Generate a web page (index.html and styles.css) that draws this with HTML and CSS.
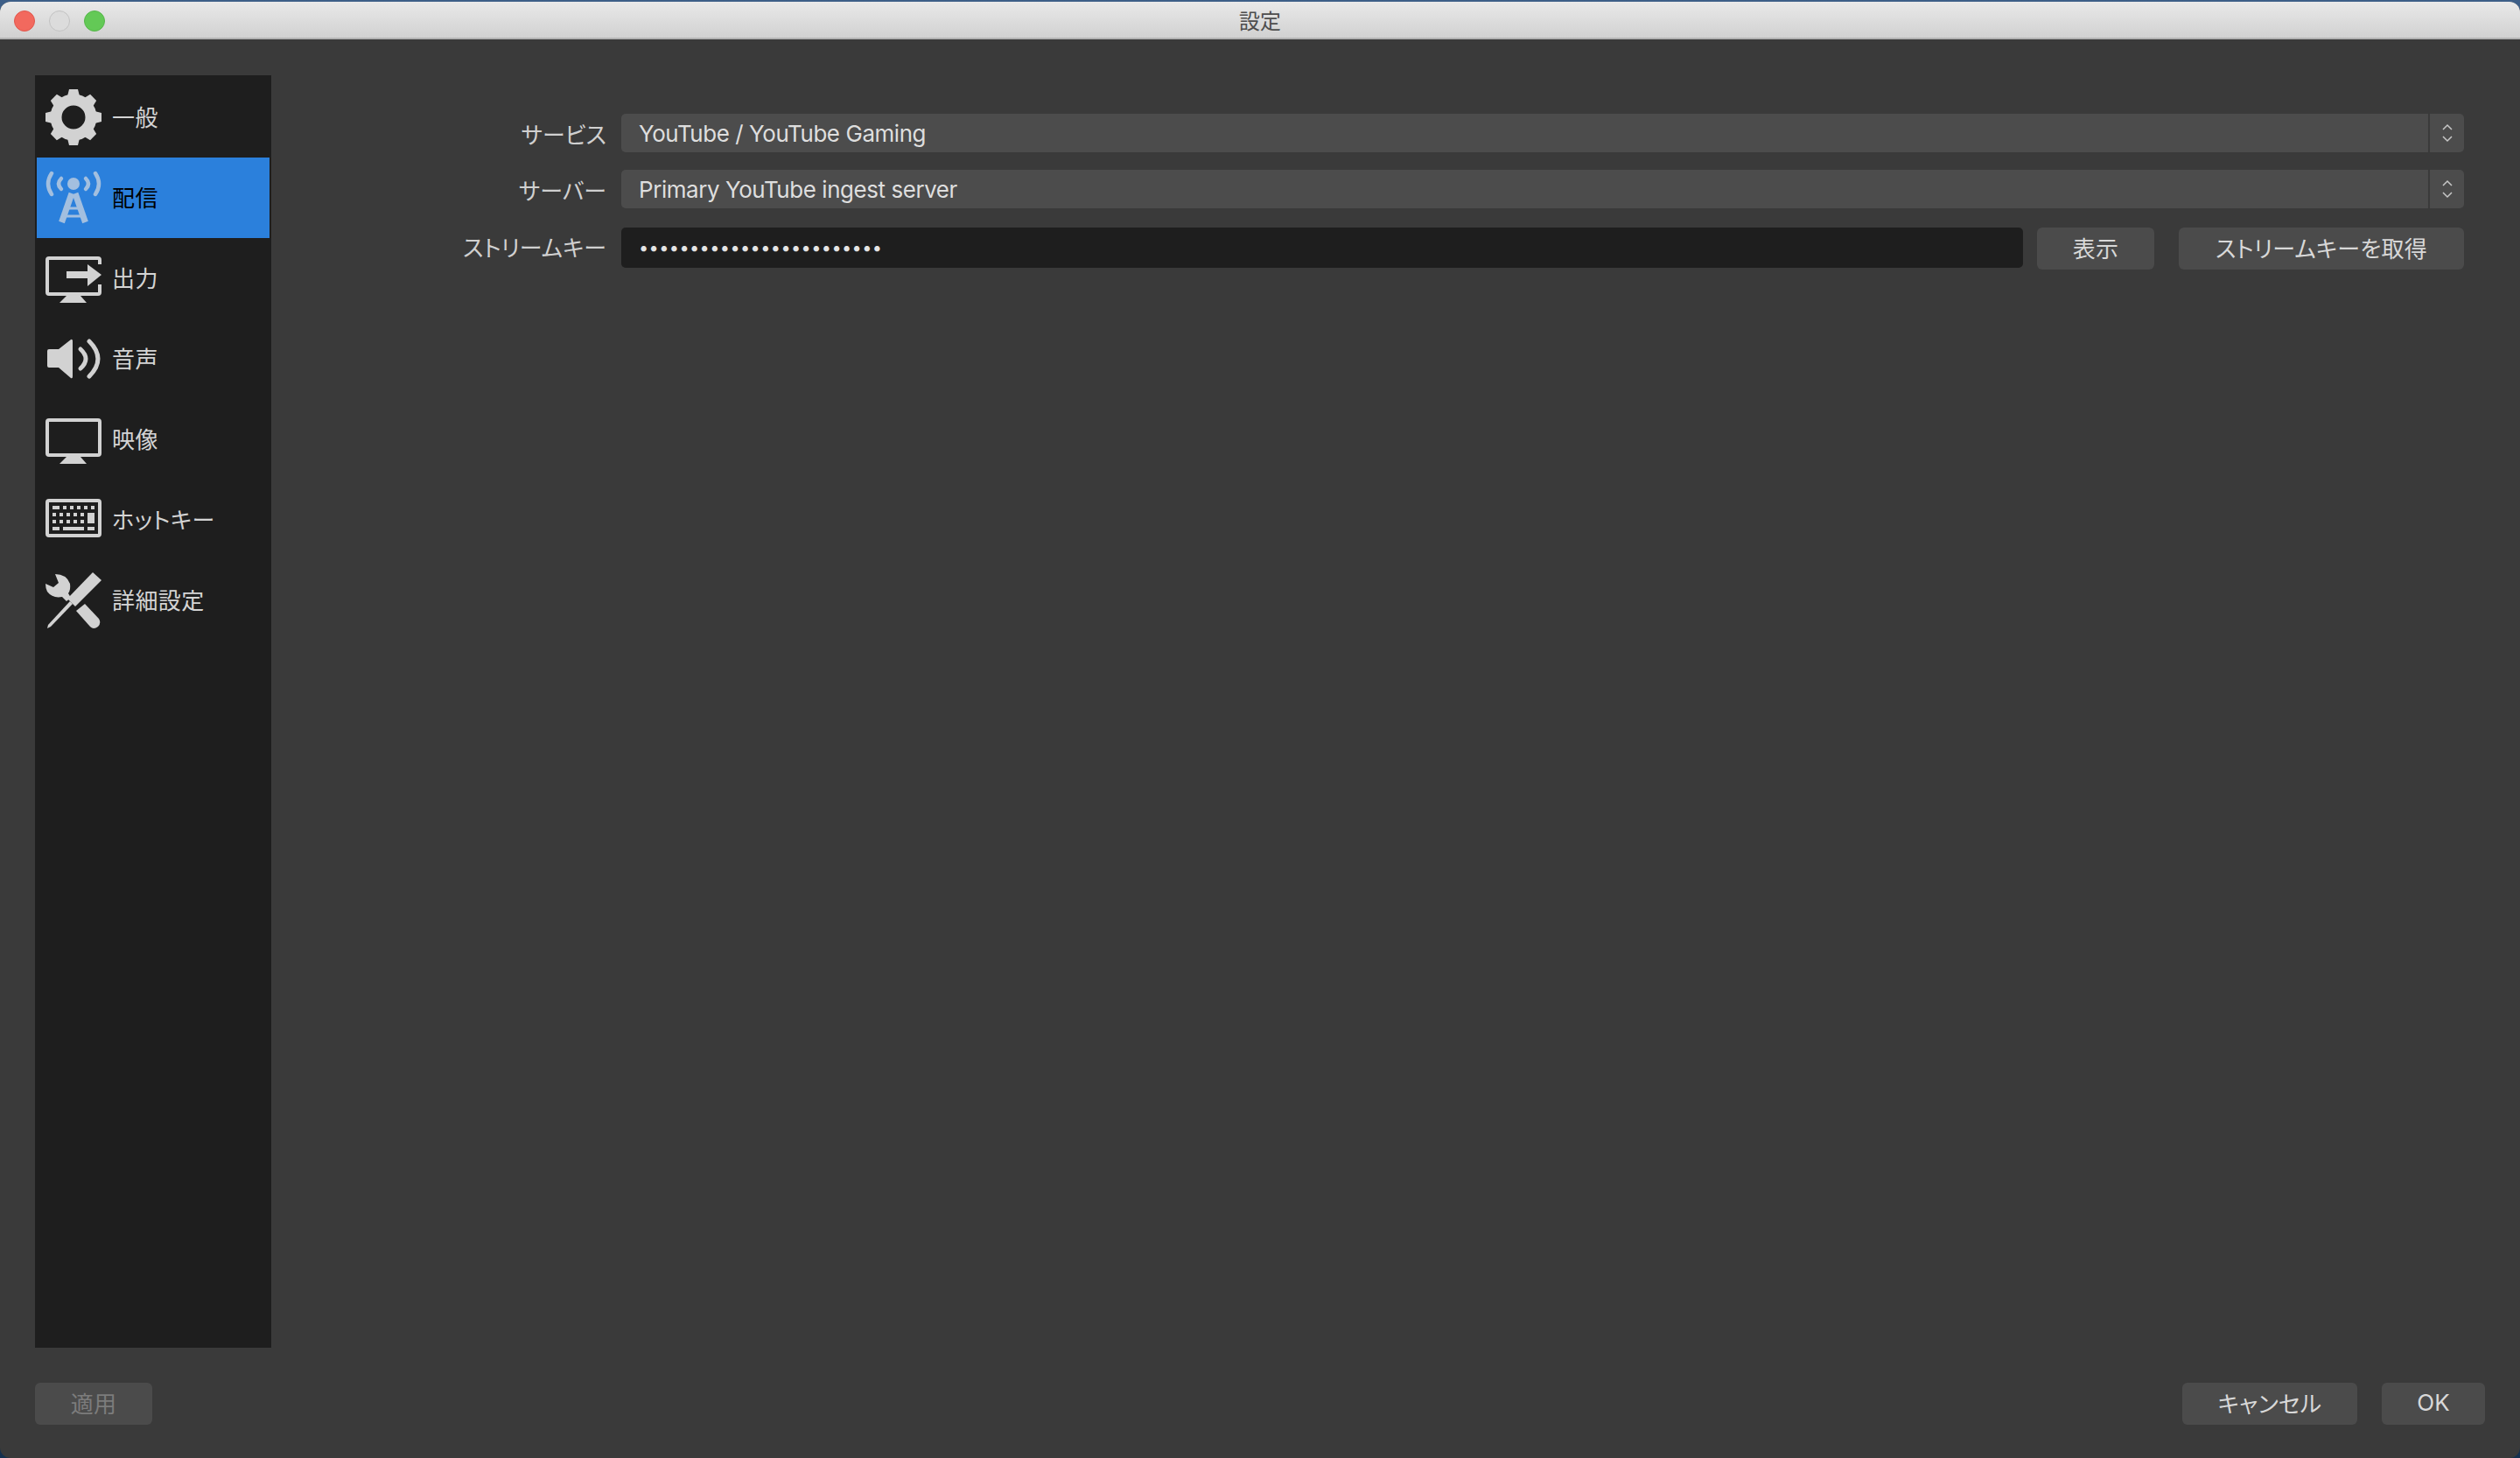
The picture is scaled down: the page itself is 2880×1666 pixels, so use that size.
FILE: index.html
```html
<!DOCTYPE html>
<html>
<head>
    <title>設定</title>
    <link rel="stylesheet" href="styles.css">
</head>
<body>
    <div class="window">
        <div class="titlebar">
            <div class="lights">
                <span class="light red"></span>
                <span class="light grey"></span>
                <span class="light green"></span>
            </div>
            <div class="title">設定</div>
        </div>

        <div class="main">
            <div class="content">
                <div class="sidebar">
                    <div class="item">
                        <svg class="icon" viewBox="0 0 64 64">
                            <circle cx="32" cy="32" r="20" fill="none" stroke="currentColor" stroke-width="13"/>
                            <g fill="currentColor">
                                <polygon id="tooth" points="24,12 27,0 37,0 40,12"/>
                                <use href="#tooth" transform="rotate(45 32 32)"/>
                                <use href="#tooth" transform="rotate(90 32 32)"/>
                                <use href="#tooth" transform="rotate(135 32 32)"/>
                                <use href="#tooth" transform="rotate(180 32 32)"/>
                                <use href="#tooth" transform="rotate(225 32 32)"/>
                                <use href="#tooth" transform="rotate(270 32 32)"/>
                                <use href="#tooth" transform="rotate(315 32 32)"/>
                            </g>
                        </svg>
                        <span>一般</span>
                    </div>
                    <div class="item selected">
                        <svg class="icon" viewBox="0 0 64 64">
                            <circle cx="32" cy="16" r="7" fill="currentColor"/>
                            <g fill="none" stroke="currentColor" stroke-linecap="round">
                                <path d="M7 4Q-1 16 7 28" stroke-width="4.5"/>
                                <path d="M57 4Q65 16 57 28" stroke-width="4.5"/>
                                <path d="M18 10Q12 16 18 22" stroke-width="4.5"/>
                                <path d="M46 10Q52 16 46 22" stroke-width="4.5"/>
                            </g>
                            <g fill="none" stroke="currentColor">
                                <path d="M30 27L18.5 60" stroke-width="7"/>
                                <path d="M34 27L45.5 60" stroke-width="7"/>
                                <path d="M25 44H39" stroke-width="3"/>
                                <path d="M22 53H42" stroke-width="3"/>
                            </g>
                        </svg>
                        <span>配信</span>
                    </div>
                    <div class="item">
                        <svg class="icon" viewBox="0 0 64 64">
                            <path d="M62 16V11a2 2 0 0 0-2-2H4a2 2 0 0 0-2 2V48a2 2 0 0 0 2 2H60a2 2 0 0 0 2-2V39" fill="none" stroke="currentColor" stroke-width="4"/>
                            <polygon points="24,24 48,24 48,16 64,28 48,41 48,32 24,32" fill="currentColor"/>
                            <polygon points="24,52 40,52 47,60 16,60" fill="currentColor"/>
                        </svg>
                        <span>出力</span>
                    </div>
                    <div class="item">
                        <svg class="icon" viewBox="0 0 64 64">
                            <path d="M4 21H15L29 10Q31 9 31 12V52Q31 55 29 54L15 42H4Q2 42 2 40V23Q2 21 4 21Z" fill="currentColor"/>
                            <g fill="none" stroke="currentColor" stroke-width="5" stroke-linecap="round">
                                <path d="M40 21Q52 32 40 43"/>
                                <path d="M50 12Q70 32 50 52"/>
                            </g>
                        </svg>
                        <span>音声</span>
                    </div>
                    <div class="item">
                        <svg class="icon" viewBox="0 0 64 64">
                            <rect x="2" y="10" width="60" height="40" rx="2" fill="none" stroke="currentColor" stroke-width="4"/>
                            <polygon points="24,52 40,52 47,60 16,60" fill="currentColor"/>
                        </svg>
                        <span>映像</span>
                    </div>
                    <div class="item">
                        <svg class="icon" viewBox="0 0 64 64">
                            <rect x="2" y="10" width="60" height="40" rx="2" fill="none" stroke="currentColor" stroke-width="4"/>
                            <g fill="currentColor">
                                <rect x="8" y="16" width="8" height="4"/>
                                <rect x="20" y="16" width="4" height="4"/>
                                <rect x="28" y="16" width="4" height="4"/>
                                <rect x="36" y="16" width="4" height="4"/>
                                <rect x="44" y="16" width="4" height="4"/>
                                <rect x="52" y="16" width="4" height="4"/>
                                <rect x="8" y="24" width="4" height="4"/>
                                <rect x="16" y="24" width="4" height="4"/>
                                <rect x="24" y="24" width="4" height="4"/>
                                <rect x="32" y="24" width="4" height="4"/>
                                <rect x="40" y="24" width="4" height="4"/>
                                <rect x="48" y="24" width="8" height="12"/>
                                <rect x="8" y="32" width="4" height="4"/>
                                <rect x="16" y="32" width="4" height="4"/>
                                <rect x="24" y="32" width="4" height="4"/>
                                <rect x="32" y="32" width="4" height="4"/>
                                <rect x="40" y="32" width="4" height="4"/>
                                <rect x="8" y="40" width="8" height="4"/>
                                <rect x="20" y="40" width="24" height="4"/>
                                <rect x="48" y="40" width="8" height="4"/>
                            </g>
                        </svg>
                        <span>ホットキー</span>
                    </div>
                    <div class="item">
                        <svg class="icon" viewBox="0 0 64 64">
                            <g fill="currentColor">
                                <polygon points="54,0 64,9 34,39 25,30"/>
                                <polygon points="28,33 31,36 6,62 2,64 3,60"/>
                                <path d="M35 44L45 36L61 53Q64 58 60 62Q55 66 51 62Z"/>
                                <path d="M11 2Q24 2 28 13Q29 20 26 24L29 29L24 33L19 28Q8 30 2 22Q0 18 0 13L9 17L15 12Z"/>
                            </g>
                        </svg>
                        <span>詳細設定</span>
                    </div>
                </div>

                <div class="form">
                    <div class="row">
                        <label>サービス</label>
                        <div class="combo">
                            <div class="combo-text">YouTube / YouTube Gaming</div>
                            <div class="combo-arrows">
                                <svg class="chevrons" viewBox="0 0 12 24"><path d="M1 8L6 3L11 8M1 16L6 21L11 16"/></svg>
                            </div>
                        </div>
                    </div>
                    <div class="row">
                        <label>サーバー</label>
                        <div class="combo">
                            <div class="combo-text">Primary YouTube ingest server</div>
                            <div class="combo-arrows">
                                <svg class="chevrons" viewBox="0 0 12 24"><path d="M1 8L6 3L11 8M1 16L6 21L11 16"/></svg>
                            </div>
                        </div>
                    </div>
                    <div class="row key-row">
                        <label>ストリームキー</label>
                        <div class="key-input">••••••••••••••••••••••••</div>
                        <button class="btn show-btn">表示</button>
                        <button class="btn get-key-btn">ストリームキーを取得</button>
                    </div>
                </div>
            </div>

            <div class="footer">
                <button class="btn apply-btn" disabled>適用</button>
                <div class="footer-right">
                    <button class="btn cancel-btn">キャンセル</button>
                    <button class="btn ok-btn">OK</button>
                </div>
            </div>
        </div>
    </div>
</body>
</html>
```

FILE: styles.css
```css
html, body {
    margin: 0;
    padding: 0;
    height: 1666px;
    overflow: hidden;
}

body {
    background: linear-gradient(#3d5f88, #14304f);
    font-family: Inter, "Noto Sans CJK JP", sans-serif;
    font-size: 26px;
    font-feature-settings: "palt";
    color: #d8d8d8;
}

.window {
    margin-top: 2px;
    height: 1664px;
    border-radius: 12px;
    overflow: hidden;
    background-color: #3a3a3a;
    display: flex;
    flex-direction: column;
}

.titlebar {
    height: 38px;
    padding-top: 3px;
    flex: none;
    display: grid;
    grid-template-columns: 1fr auto 1fr;
    align-items: center;
    background: linear-gradient(#e9e9e9, #d1d1d1);
    border-bottom: 2px solid #b1b1b1;
}

.lights {
    display: flex;
    gap: 16px;
    padding-left: 16px;
}

.light {
    width: 22px;
    height: 22px;
    border-radius: 50%;
    border: 1px solid transparent;
}

.red {
    background-color: #f2695e;
    border-color: #e0564c;
}

.grey {
    background-color: #dcdcdc;
    border-color: #c2c2c2;
}

.green {
    background-color: #63c956;
    border-color: #55b649;
}

.title {
    font-size: 24px;
    color: #4d4d4d;
    margin-bottom: 3px;
}

.main {
    flex: 1;
    display: flex;
    flex-direction: column;
    padding: 41px 40px 38px;
    min-height: 0;
}

.content {
    flex: 1;
    display: flex;
    min-height: 0;
}

.sidebar {
    width: 266px;
    padding: 2px;
    background-color: #1e1e1e;
    flex: none;
}

.item {
    height: 92px;
    display: flex;
    align-items: center;
    gap: 12px;
    padding-left: 10px;
    color: #d4d4d4;
    letter-spacing: 0.4px;
}

.item span {
    margin-bottom: 3px;
}

.item.selected {
    background-color: #2b80dc;
    color: #000;
}

.icon {
    width: 64px;
    height: 64px;
    flex: none;
    color: #d2d2d2;
}

.selected .icon {
    color: #a3bfdf;
}

.form {
    flex: 1;
    padding: 44px 24px 0 0;
}

.row {
    display: flex;
    align-items: center;
    gap: 17px;
    margin-bottom: 20px;
}

.row label {
    width: 383px;
    flex: none;
    text-align: right;
    color: #d0d0d0;
}

.combo {
    flex: 1;
    height: 44px;
    display: flex;
    border-radius: 5px;
    overflow: hidden;
}

.combo-text {
    flex: 1;
    padding-left: 20px;
    line-height: 46px;
    background-color: #4c4c4c;
    color: #dedede;
    letter-spacing: -0.45px;
}

.combo-arrows {
    width: 39px;
    margin-left: 2px;
    display: flex;
    align-items: center;
    justify-content: center;
    background-color: #4c4c4c;
}

.chevrons {
    width: 12px;
    height: 24px;
    fill: none;
    stroke: #c8c8c8;
    stroke-width: 1.5;
}

.key-row {
    margin-top: 22px;
    align-items: flex-start;
}

.key-row label {
    line-height: 48px;
}

.key-input {
    flex: 1;
    height: 46px;
    line-height: 46px;
    padding-left: 20px;
    border-radius: 5px;
    background-color: #1e1e1e;
    color: #e4e4e4;
    font-size: 20px;
    letter-spacing: 0.35px;
}

.btn {
    height: 48px;
    padding: 0 0 3px;
    border: none;
    border-radius: 6px;
    background-color: #4b4b4b;
    color: #d8d8d8;
    font-family: inherit;
    font-size: 26px;
    font-feature-settings: "palt";
    letter-spacing: 0.2px;
}

.show-btn {
    width: 134px;
    margin-left: -1px;
}

.get-key-btn {
    width: 326px;
    margin-left: 11px;
}

.footer {
    flex: none;
    margin-top: 40px;
    display: flex;
    justify-content: space-between;
}

.footer-right {
    display: flex;
    gap: 28px;
}

.apply-btn {
    width: 134px;
    color: #7c7c7c;
}

.cancel-btn {
    width: 200px;
}

.ok-btn {
    width: 118px;
}
```
